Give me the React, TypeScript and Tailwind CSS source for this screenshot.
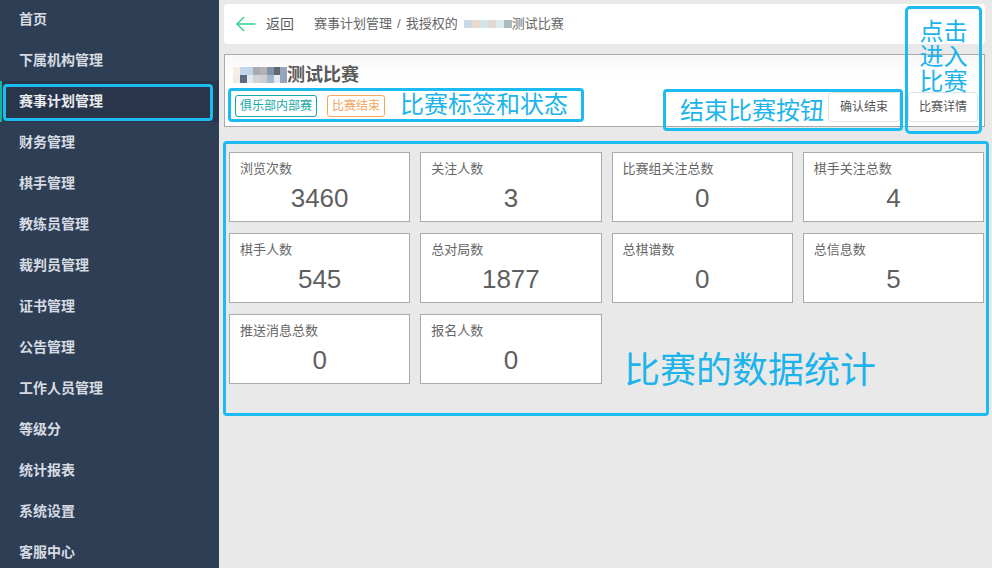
const FONT = 'font-["Helvetica_Neue","Liberation_Sans","Noto_Sans_CJK_SC",sans-serif]';

const menu = ["首页", "下属机构管理", "赛事计划管理", "财务管理", "棋手管理", "教练员管理", "裁判员管理", "证书管理", "公告管理", "工作人员管理", "等级分", "统计报表", "系统设置", "客服中心"];

const stats: [string, string][] = [
  ["浏览次数", "3460"], ["关注人数", "3"], ["比赛组关注总数", "0"], ["棋手关注总数", "4"],
  ["棋手人数", "545"], ["总对局数", "1877"], ["总棋谱数", "0"], ["总信息数", "5"],
  ["推送消息总数", "0"], ["报名人数", "0"],
];

const titleBlur = [
  ["#f6efe6", "#f4ece2"], ["#c4d6ea", "#5d6a80"], ["#bcd3ea", "#e4e8ef"], ["#a9aaad", "#d2d3d3"],
  ["#b2b3b6", "#cfcfd0"], ["#7f93a8", "#a4b8cb"], ["#62666f", "#e6ebf2"], ["#94a6bd", "#94a6bd"],
];

export default function App() {
  return (
    <div className={`${FONT} relative flex h-[568px] w-[992px] overflow-hidden bg-[#e9e9e9] text-[#5f5f5f]`}>
      <aside className="h-full w-[219px] shrink-0 overflow-hidden bg-[#2e3e55]">
        <div className="-mt-[1px]">
          {menu.map((m) => (
            <div
              key={m}
              className={`flex h-[41px] items-center border-l-2 pl-[17px] text-[14px] font-bold ${m === "赛事计划管理" ? "border-[#13b59a] bg-[#28354b] text-[#e8ebef]" : "border-transparent text-[#d6dbe2]"}`}
            >
              {m}
            </div>
          ))}
        </div>
      </aside>

      <main className="min-w-0 flex-1 pl-[5px] pr-[7px] pt-[4px]">
        <header className="flex h-[40px] items-center rounded-[4px] bg-white pl-[12px]">
          <svg width="20" height="16" viewBox="0 0 20 16" fill="none" stroke="#2ed28a" strokeWidth="1.4" className="shrink-0">
            <path d="M19.5 8H1M8 1L1 8l7 7" />
          </svg>
          <span className="ml-[10px] text-[14px] text-[#5c5c5c]">返回</span>
          <span className="ml-[20px] flex items-center text-[13px] text-[#666]">
            赛事计划管理
            <span className="mx-[5px]">/</span>
            我授权的
            <span className="ml-[6px] flex h-[8px] w-[48px] blur-[0.4px]">
              <i className="w-[8px] bg-[#c5dbea]" /><i className="w-[8px] bg-[#ecd9cf]" /><i className="w-[8px] bg-[#d2e5e5]" /><i className="w-[8px] bg-[#e3d8d3]" /><i className="w-[8px] bg-[#e1e9f0]" /><i className="w-[8px] bg-[#a8b9c0]" />
            </span>
            测试比赛
          </span>
        </header>

        <section className="mt-[10px] h-[73px] border border-[#aaa] bg-gradient-to-b from-[#f7f7f7] to-white to-30% pl-[8px] pr-[6px]">
          <div className="flex h-[37px] items-center pt-[2px]">
            <span className="grid h-[16px] w-[54px] grid-cols-8 grid-rows-2 blur-[0.5px]">
              {titleBlur.map((c, i) => <i key={i} className="contents"><b style={{ background: c[0], gridColumn: i + 1, gridRow: 1 }} /><b style={{ background: c[1], gridColumn: i + 1, gridRow: 2 }} /></i>)}
            </span>
            <span className="text-[18px] font-bold leading-[20px] text-[#5a5a5a]">测试比赛</span>
          </div>
          <div className="ml-[2px] flex items-start justify-between">
            <div className="flex gap-[10px] pt-[3px]">
              <span className="flex h-[22px] items-center rounded-[3px] border border-[#17a8a5] px-[4px] text-[12px] text-[#17a8a5]">俱乐部内部赛</span>
              <span className="flex h-[22px] items-center rounded-[3px] border border-[#f5a55c] px-[4px] text-[12px] text-[#f5a55c]">比赛结束</span>
            </div>
            <div className="flex gap-[8px]">
              <button className="h-[30px] w-[72px] rounded-[3px] border border-[#e4e4e4] bg-white text-[12px] text-[#555]">确认结束</button>
              <button className="h-[30px] w-[70px] rounded-[3px] border border-[#e4e4e4] bg-white text-[12px] text-[#555]">比赛详情</button>
            </div>
          </div>
        </section>

        <section className="ml-[5px] mr-[-5px] mt-[25px] grid grid-cols-4 gap-x-[10px] gap-y-[11px] pr-[6px]">
          {stats.map(([label, value]) => (
            <div key={label} className="h-[70px] border border-[#aaa] bg-white px-[10px] pt-[7px]">
              <div className="text-[13px] leading-[18px] text-[#666]">{label}</div>
              <div className="mt-[4px] text-center text-[26px] leading-[32px] text-[#5f5f5f]">{value}</div>
            </div>
          ))}
        </section>
      </main>

      {/* annotations drawn over the page */}
      <div className="absolute left-[3px] top-[84px] h-[37px] w-[210px] rounded-[4px] border-[3px] border-[#1cbcf2]" />
      <div className="absolute left-[228px] top-[88px] flex h-[34px] w-[356px] items-center rounded-[4px] border-[3px] border-[#1cbcf2] pl-[169px] text-[24px] text-[#1cb4ea]">比赛标签和状态</div>
      <div className="absolute left-[663px] top-[89px] flex h-[42px] w-[240px] items-center rounded-[4px] border-[3px] border-[#1cbcf2] pl-[14px] pt-[2px] text-[24px] text-[#1cb4ea]">结束比赛按钮</div>
      <div className="absolute left-[905px] top-[6px] h-[128px] w-[77px] rounded-[5px] border-[3px] border-[#1cbcf2] pt-[10px] text-center text-[24px] leading-[25px] text-[#1cb4ea]">点击<br />进入<br />比赛</div>
      <div className="absolute left-[223px] top-[141px] h-[275px] w-[766px] rounded-[4px] border-[3px] border-[#1cbcf2]" />
      <div className="absolute left-[624px] top-[350px] text-[36px] leading-[42px] text-[#1cb4ea]">比赛的数据统计</div>
    </div>
  );
}
